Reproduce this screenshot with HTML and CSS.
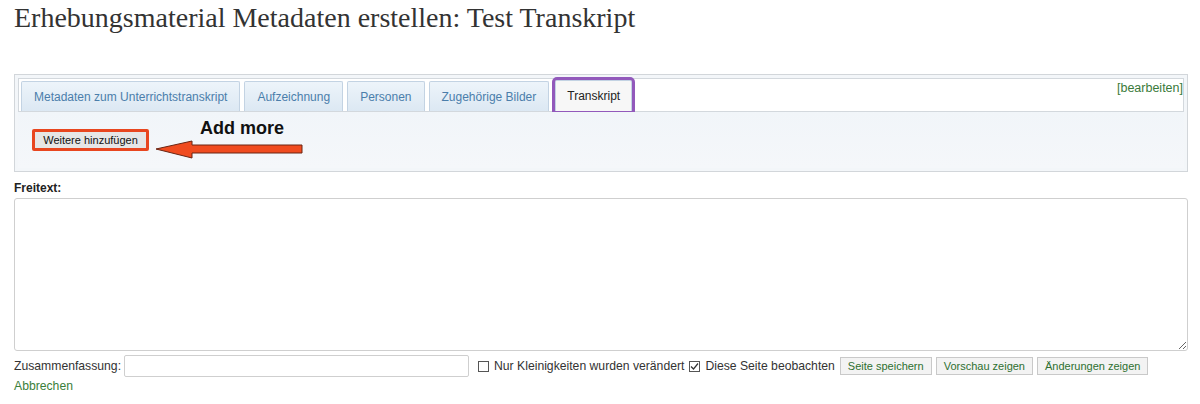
FILE: index.html
```html
<!DOCTYPE html>
<html lang="de">
<head>
<meta charset="utf-8">
<title>Erhebungsmaterial Metadaten erstellen</title>
<link rel="stylesheet" href="styles.css">
</head>
<body>
<div class="page">
  <h1 class="title">Erhebungsmaterial Metadaten erstellen: Test Transkript</h1>

  <div class="formbox">
    <div class="tabstrip">
      <ul class="tabs">
        <li class="tab">Metadaten zum Unterrichtstranskript</li>
        <li class="tab">Aufzeichnung</li>
        <li class="tab">Personen</li>
        <li class="tab">Zugehörige Bilder</li>
        <li class="tab tab-active">Transkript</li>
      </ul>
      <a class="editlink">[bearbeiten]</a>
    </div>
    <div class="tabpanel">
      <button class="addbtn">Weitere hinzufügen</button>
      <span class="annot-label">Add more</span>
      <svg class="annot-arrow" width="150" height="20" viewBox="0 0 150 20">
        <polygon points="1,9 37,1 37,5 147,5 147,13 37,13 37,18" fill="#f04b1f" stroke="#6a2412" stroke-width="1"/>
      </svg>
    </div>
  </div>

  <label class="fieldlabel">Freitext:</label>
  <div class="textarea-wrap">
    <textarea class="freetext"></textarea>
  </div>

  <div class="editoptions">
    <span class="summarylabel">Zusammenfassung:</span>
    <input class="summary" type="text">
    <label class="check"><span class="cbox"></span>Nur Kleinigkeiten wurden verändert</label>
    <label class="check"><span class="cbox cbox-on"><svg width="11" height="11" viewBox="0 0 11 11"><path d="M2 5.5 L4.5 8 L9 2.5" fill="none" stroke="#333" stroke-width="1.2"/></svg></span>Diese Seite beobachten</label>
    <button class="actbtn">Seite speichern</button>
    <button class="actbtn">Vorschau zeigen</button>
    <button class="actbtn">Änderungen zeigen</button>
  </div>
  <a class="cancel">Abbrechen</a>
</div>
</body>
</html>
```

FILE: styles.css
```css
* { box-sizing: border-box; }
html, body { margin: 0; padding: 0; background: #fff; }
body {
  font-family: "Liberation Sans", Arial, sans-serif;
  font-size: 12.2px;
  color: #222;
}
.page {
  padding: 2px 12px 0 14px;
}
.title {
  font-family: "Liberation Serif", "Times New Roman", serif;
  font-weight: normal;
  font-size: 28px;
  line-height: 32px;
  color: #333;
  margin: 0 0 40px 0;
}
.formbox {
  border: 1px solid #d2d6da;
  background: #f3f6f9;
  padding: 3px;
  height: 98px;
  display: flex;
  flex-direction: column;
}
.tabstrip {
  background: #fff;
  border: 1px solid #d3d8dd;
  height: 34px;
  display: flex;
  align-items: flex-end;
  justify-content: space-between;
  padding-left: 2px;
}
.tabs {
  list-style: none;
  margin: 0;
  padding: 0;
  display: flex;
  gap: 4px;
  align-items: flex-end;
}
.tab {
  height: 30px;
  line-height: 30px;
  padding: 0 12px;
  border: 1px solid #c3d3e3;
  border-bottom: none;
  border-radius: 2px 2px 0 0;
  background: linear-gradient(#edf4fa, #dce8f3);
  color: #4b7eab;
  font-size: 12px;
}
.tab-active {
  background: #f7f7f7;
  color: #222;
  margin-left: 2px;
  outline: 3px solid #9259bb;
  outline-offset: 0;
  height: 31px;
  line-height: 31px;
  padding: 0 11px;
}
.editlink {
  align-self: flex-start;
  color: #3a7a3a;
  font-size: 12.5px;
  margin-top: 2px;
  margin-right: 0;
}
.tabpanel {
  position: relative;
  flex: 1;
  background: linear-gradient(#f1f5f9, #f5f7fa);
  padding: 17px 0 0 14px;
}
.addbtn {
  display: block;
  font-family: "Liberation Sans", Arial, sans-serif;
  font-size: 11px;
  color: #111;
  background: #e6e6e6;
  border: 3px solid #e8461f;
  border-radius: 2px;
  height: 22px;
  width: 117px;
  padding: 0;
  line-height: 14px;
}
.annot-label {
  position: absolute;
  left: 182px;
  top: 6px;
  font-size: 18px;
  font-weight: bold;
  color: #111;
}
.annot-arrow {
  position: absolute;
  left: 137px;
  top: 28px;
}
.fieldlabel {
  display: block;
  font-weight: bold;
  font-size: 12px;
  margin: 9px 0 0 0;
  height: 17px;
}
.textarea-wrap {
  height: 153px;
}
.freetext {
  display: block;
  width: 100%;
  height: 153px;
  border: 1px solid #cfcfcf;
  border-radius: 3px;
  resize: vertical;
  background: #fff;
}
.editoptions {
  display: flex;
  align-items: center;
  margin-top: 4px;
  height: 22px;
  white-space: nowrap;
}
.summarylabel {
  color: #333;
  margin-right: 3px;
}
.summary {
  width: 345px;
  height: 22px;
  border: 1px solid #cfcfcf;
  border-radius: 2px;
  margin: 0 9px 0 0;
}
.check {
  display: inline-flex;
  align-items: center;
  color: #333;
  margin-right: 5px;
}
.cbox {
  display: inline-flex;
  width: 11px;
  height: 11px;
  border: 1px solid #555;
  margin-right: 5px;
  position: relative;
}
.cbox svg {
  position: absolute;
  left: -1px;
  top: -1px;
}
.check + .check { margin-right: 5px; }
.actbtn {
  font-family: "Liberation Sans", Arial, sans-serif;
  font-size: 11px;
  color: #2e7030;
  background: #f3f3f3;
  border: 1px solid #c9c9c9;
  border-radius: 0;
  height: 18px;
  padding: 0 7px;
  margin-right: 4px;
  line-height: 16px;
}
.cancel {
  display: block;
  color: #3a7e3a;
  font-size: 12.2px;
  margin-top: 2px;
}
```
